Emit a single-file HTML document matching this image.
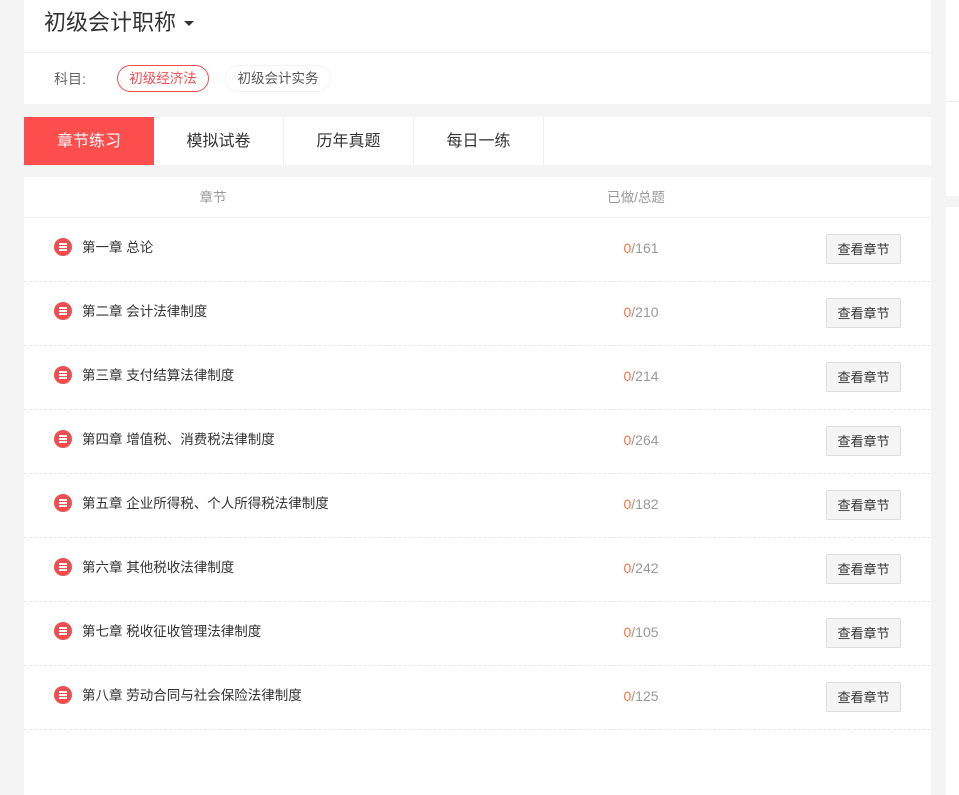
<!DOCTYPE html>
<html><head><meta charset="utf-8"><style>
*{margin:0;padding:0;box-sizing:border-box}
body{width:959px;height:795px;background:#f4f4f4;position:relative;overflow:hidden;font-family:"Liberation Sans","Noto Sans CJK SC",sans-serif;color:#333}
.a{position:absolute}
.w{background:#fff}
.tab{position:absolute;top:117px;height:48px;width:130px;line-height:50px;text-align:center;font-size:16px;color:#333;border-right:1px solid #eee}
.row{position:absolute;left:24px;width:907px;height:64px;border-bottom:1px dashed #e6e6e6}
.ic{position:absolute;left:30px;top:20px;width:18px;height:18px;border-radius:50%;background:#f24e50}
.ic i{position:absolute;left:5px;width:8px;height:1.6px;background:#fff}
.t{position:absolute;left:58px;top:20px;font-size:13.5px;line-height:20px;color:#333}
.n{position:absolute;left:574px;width:86px;text-align:center;top:20px;font-size:14px;line-height:20px;color:#999}
.n b{font-weight:normal;color:#f5773a}
.btn{position:absolute;left:802px;top:16px;width:75px;height:30px;border:1px solid #ddd;border-radius:2px;background:#f5f5f5;font-size:13px;line-height:30px;text-align:center;color:#333}
</style></head><body>
<div class="a w" style="left:24px;top:0;width:907px;height:104px"></div>
<div class="a" style="left:24px;top:52px;width:907px;height:1px;background:#eee"></div>
<div class="a" style="left:44px;top:8px;font-size:22px;line-height:30px;color:#333">初级会计职称</div>
<div class="a" style="left:184px;top:21px;width:0;height:0;border-left:5px solid transparent;border-right:5px solid transparent;border-top:5px solid #333"></div>
<div class="a" style="left:54px;top:70px;font-size:14px;line-height:18px;color:#666">科目:</div>
<div class="a" style="left:117px;top:65px;width:92px;height:27px;border:1px solid #f24e50;border-radius:14px;color:#f24e50;font-size:13.5px;line-height:26px;text-align:center">初级经济法</div>
<div class="a" style="left:225px;top:65px;width:106px;height:27px;border:1px solid #f3f3f3;border-radius:14px;color:#555;font-size:13.5px;line-height:26px;text-align:center">初级会计实务</div>

<div class="a w" style="left:24px;top:117px;width:907px;height:48px"></div>
<div class="tab" style="left:24px;background:#fe4d4d;color:#fff;border:none;width:130px">章节练习</div>
<div class="tab" style="left:154px">模拟试卷</div>
<div class="tab" style="left:284px">历年真题</div>
<div class="tab" style="left:414px">每日一练</div>

<div class="a w" style="left:24px;top:177px;width:907px;height:618px"></div>
<div class="a" style="left:24px;top:217px;width:907px;height:1px;background:#f0f0f0"></div>
<div class="a" style="left:183px;top:188px;width:60px;text-align:center;font-size:13.5px;line-height:20px;color:#999">章节</div>
<div class="a" style="left:596px;top:188px;width:80px;text-align:center;font-size:13.5px;line-height:20px;color:#999">已做/总题</div>

<div class="a w" style="left:946px;top:0;width:13px;height:196px"></div>
<div class="a" style="left:946px;top:101px;width:13px;height:1px;background:#eee"></div>
<div class="a w" style="left:946px;top:207px;width:13px;height:588px"></div>

<div class="row" style="top:218px"><div class="ic"><i style="top:5px"></i><i style="top:8.2px"></i><i style="top:11.4px"></i></div><div class="t">第一章 总论</div><div class="n"><b>0</b>/161</div><div class="btn">查看章节</div></div>
<div class="row" style="top:282px"><div class="ic"><i style="top:5px"></i><i style="top:8.2px"></i><i style="top:11.4px"></i></div><div class="t">第二章 会计法律制度</div><div class="n"><b>0</b>/210</div><div class="btn">查看章节</div></div>
<div class="row" style="top:346px"><div class="ic"><i style="top:5px"></i><i style="top:8.2px"></i><i style="top:11.4px"></i></div><div class="t">第三章 支付结算法律制度</div><div class="n"><b>0</b>/214</div><div class="btn">查看章节</div></div>
<div class="row" style="top:410px"><div class="ic"><i style="top:5px"></i><i style="top:8.2px"></i><i style="top:11.4px"></i></div><div class="t">第四章 增值税、消费税法律制度</div><div class="n"><b>0</b>/264</div><div class="btn">查看章节</div></div>
<div class="row" style="top:474px"><div class="ic"><i style="top:5px"></i><i style="top:8.2px"></i><i style="top:11.4px"></i></div><div class="t">第五章 企业所得税、个人所得税法律制度</div><div class="n"><b>0</b>/182</div><div class="btn">查看章节</div></div>
<div class="row" style="top:538px"><div class="ic"><i style="top:5px"></i><i style="top:8.2px"></i><i style="top:11.4px"></i></div><div class="t">第六章 其他税收法律制度</div><div class="n"><b>0</b>/242</div><div class="btn">查看章节</div></div>
<div class="row" style="top:602px"><div class="ic"><i style="top:5px"></i><i style="top:8.2px"></i><i style="top:11.4px"></i></div><div class="t">第七章 税收征收管理法律制度</div><div class="n"><b>0</b>/105</div><div class="btn">查看章节</div></div>
<div class="row" style="top:666px"><div class="ic"><i style="top:5px"></i><i style="top:8.2px"></i><i style="top:11.4px"></i></div><div class="t">第八章 劳动合同与社会保险法律制度</div><div class="n"><b>0</b>/125</div><div class="btn">查看章节</div></div>
</body></html>
